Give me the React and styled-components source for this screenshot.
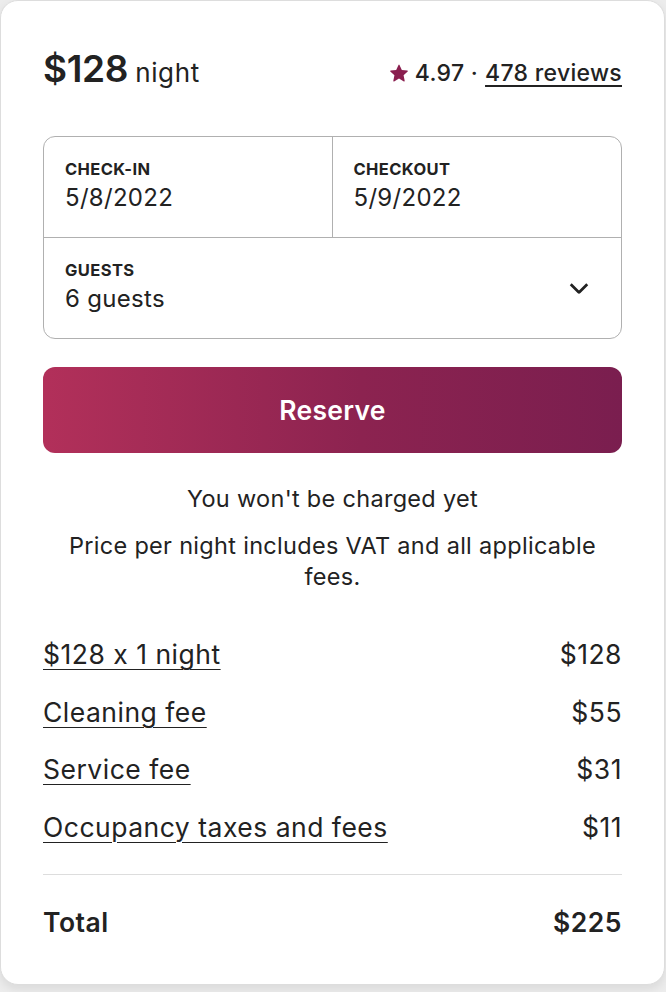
import React from "react";
import styled, { createGlobalStyle } from "styled-components";

const GlobalStyle = createGlobalStyle`
  html, body {
    margin: 0;
    padding: 0;
    background: #ececec;
  }
  body {
    font-family: "Inter", "Noto Sans", sans-serif;
    font-feature-settings: "calt" 0;
    color: #222222;
  }
`;

const fees = [
  { label: "$128 x 1 night", amount: "$128" },
  { label: "Cleaning fee", amount: "$55" },
  { label: "Service fee", amount: "$31" },
  { label: "Occupancy taxes and fees", amount: "$11" },
];

const Card = styled.div`
  box-sizing: border-box;
  width: 665px;
  background: #ffffff;
  border: 1px solid #dddddd;
  border-radius: 18px;
  box-shadow: 0 4px 10px rgba(0, 0, 0, 0.08);
  padding: 42px 42px 46px;
  margin-bottom: 7px;
`;

const Header = styled.div`
  display: flex;
  justify-content: space-between;
  align-items: baseline;
  padding-top: 6px;
  line-height: 40px;
`;

const Price = styled.div`
  display: flex;
  align-items: baseline;
  gap: 7px;
`;

const Amount = styled.span`
  font-size: 37px;
  font-weight: 600;
  letter-spacing: -0.3px;
`;

const Per = styled.span`
  font-size: 26px;
  font-weight: 400;
  letter-spacing: 0.6px;
`;

const Rating = styled.div`
  display: flex;
  align-items: center;
  gap: 7px;
  font-size: 23px;
  font-weight: 500;
  letter-spacing: 0.3px;
`;

const Reviews = styled.a`
  color: #222222;
  text-decoration: underline;
  text-underline-offset: 4px;
  text-decoration-thickness: 2px;
`;

const Picker = styled.div`
  margin-top: 43px;
  border: 1px solid #b0b0b0;
  border-radius: 12px;
  display: grid;
  grid-template-columns: 1fr 1fr;
`;

const Cell = styled.div`
  padding: 22px 21px 24px;
  border-right: ${(p) => (p.$divider ? "1px solid #b0b0b0" : "none")};
  border-bottom: ${(p) => (p.$bottom ? "1px solid #b0b0b0" : "none")};
`;

const GuestCell = styled.div`
  grid-column: 1 / span 2;
  display: flex;
  justify-content: space-between;
  align-items: center;
  padding: 22px 31px 24px 21px;
`;

const Label = styled.div`
  font-size: 16.5px;
  font-weight: 700;
  letter-spacing: 0.4px;
  line-height: 20px;
`;

const Value = styled.div`
  font-size: 24px;
  font-weight: 400;
  letter-spacing: 0.3px;
  line-height: 30px;
  margin-top: 4px;
`;

const ReserveButton = styled.button`
  display: block;
  width: 100%;
  height: 86px;
  margin-top: 28px;
  border: none;
  border-radius: 12px;
  background: linear-gradient(to right, #b2305a 0%, #8c2350 55%, #7a1e4f 100%);
  color: #ffffff;
  font-family: "Inter", sans-serif;
  font-size: 26.5px;
  font-weight: 600;
  letter-spacing: 0.3px;
  cursor: pointer;
`;

const Note = styled.p`
  margin: ${(p) => p.$top || "0"} 0 0;
  text-align: center;
  font-size: 23.5px;
  letter-spacing: 0.3px;
  line-height: 31px;
  padding: 0 12px;
`;

const FeeList = styled.div`
  margin-top: 47px;
  display: flex;
  flex-direction: column;
  gap: 26.5px;
  padding-bottom: 31px;
  border-bottom: 1px solid #dddddd;
`;

const FeeRow = styled.div`
  display: flex;
  justify-content: space-between;
  font-size: 26.5px;
  letter-spacing: 0.5px;
  line-height: 31px;
`;

const FeeLabel = styled.span`
  text-decoration: underline;
  text-underline-offset: 5px;
  text-decoration-thickness: 1px;
`;

const TotalRow = styled.div`
  display: flex;
  justify-content: space-between;
  font-size: 26.5px;
  font-weight: 600;
  letter-spacing: 0.5px;
  line-height: 31px;
  margin-top: 32px;
`;

function Star() {
  return (
    <svg width="18" height="18" viewBox="0 0 32 32" fill="#8a1f4f">
      <path d="M15.1 1.58l-4.13 8.88-9.86 1.27a1 1 0 0 0-.54 1.74l7.3 6.57-1.97 9.85a1 1 0 0 0 1.48 1.06l8.62-5 8.63 5a1 1 0 0 0 1.48-1.06l-1.97-9.85 7.3-6.57a1 1 0 0 0-.55-1.73l-9.86-1.28-4.12-8.88a1 1 0 0 0-1.82 0z" />
    </svg>
  );
}

function Chevron() {
  return (
    <svg width="22" height="22" viewBox="0 0 32 32" fill="none" stroke="#222" strokeWidth="4">
      <path d="M28 12L16.7 23.3a1 1 0 0 1-1.4 0L4 12" />
    </svg>
  );
}

export default function App() {
  return (
    <>
      <GlobalStyle />
      <Card>
        <Header>
          <Price>
            <Amount>$128</Amount>
            <Per>night</Per>
          </Price>
          <Rating>
            <Star />
            <span>4.97 ·</span>
            <Reviews href="#">478 reviews</Reviews>
          </Rating>
        </Header>

        <Picker>
          <Cell $divider $bottom>
            <Label>CHECK-IN</Label>
            <Value>5/8/2022</Value>
          </Cell>
          <Cell $bottom>
            <Label>CHECKOUT</Label>
            <Value>5/9/2022</Value>
          </Cell>
          <GuestCell>
            <div>
              <Label>GUESTS</Label>
              <Value>6 guests</Value>
            </div>
            <Chevron />
          </GuestCell>
        </Picker>

        <ReserveButton>Reserve</ReserveButton>

        <Note $top="30px">You won't be charged yet</Note>
        <Note $top="16px">Price per night includes VAT and all applicable fees.</Note>

        <FeeList>
          {fees.map((f) => (
            <FeeRow key={f.label}>
              <FeeLabel>{f.label}</FeeLabel>
              <span>{f.amount}</span>
            </FeeRow>
          ))}
        </FeeList>

        <TotalRow>
          <span>Total</span>
          <span>$225</span>
        </TotalRow>
      </Card>
    </>
  );
}
